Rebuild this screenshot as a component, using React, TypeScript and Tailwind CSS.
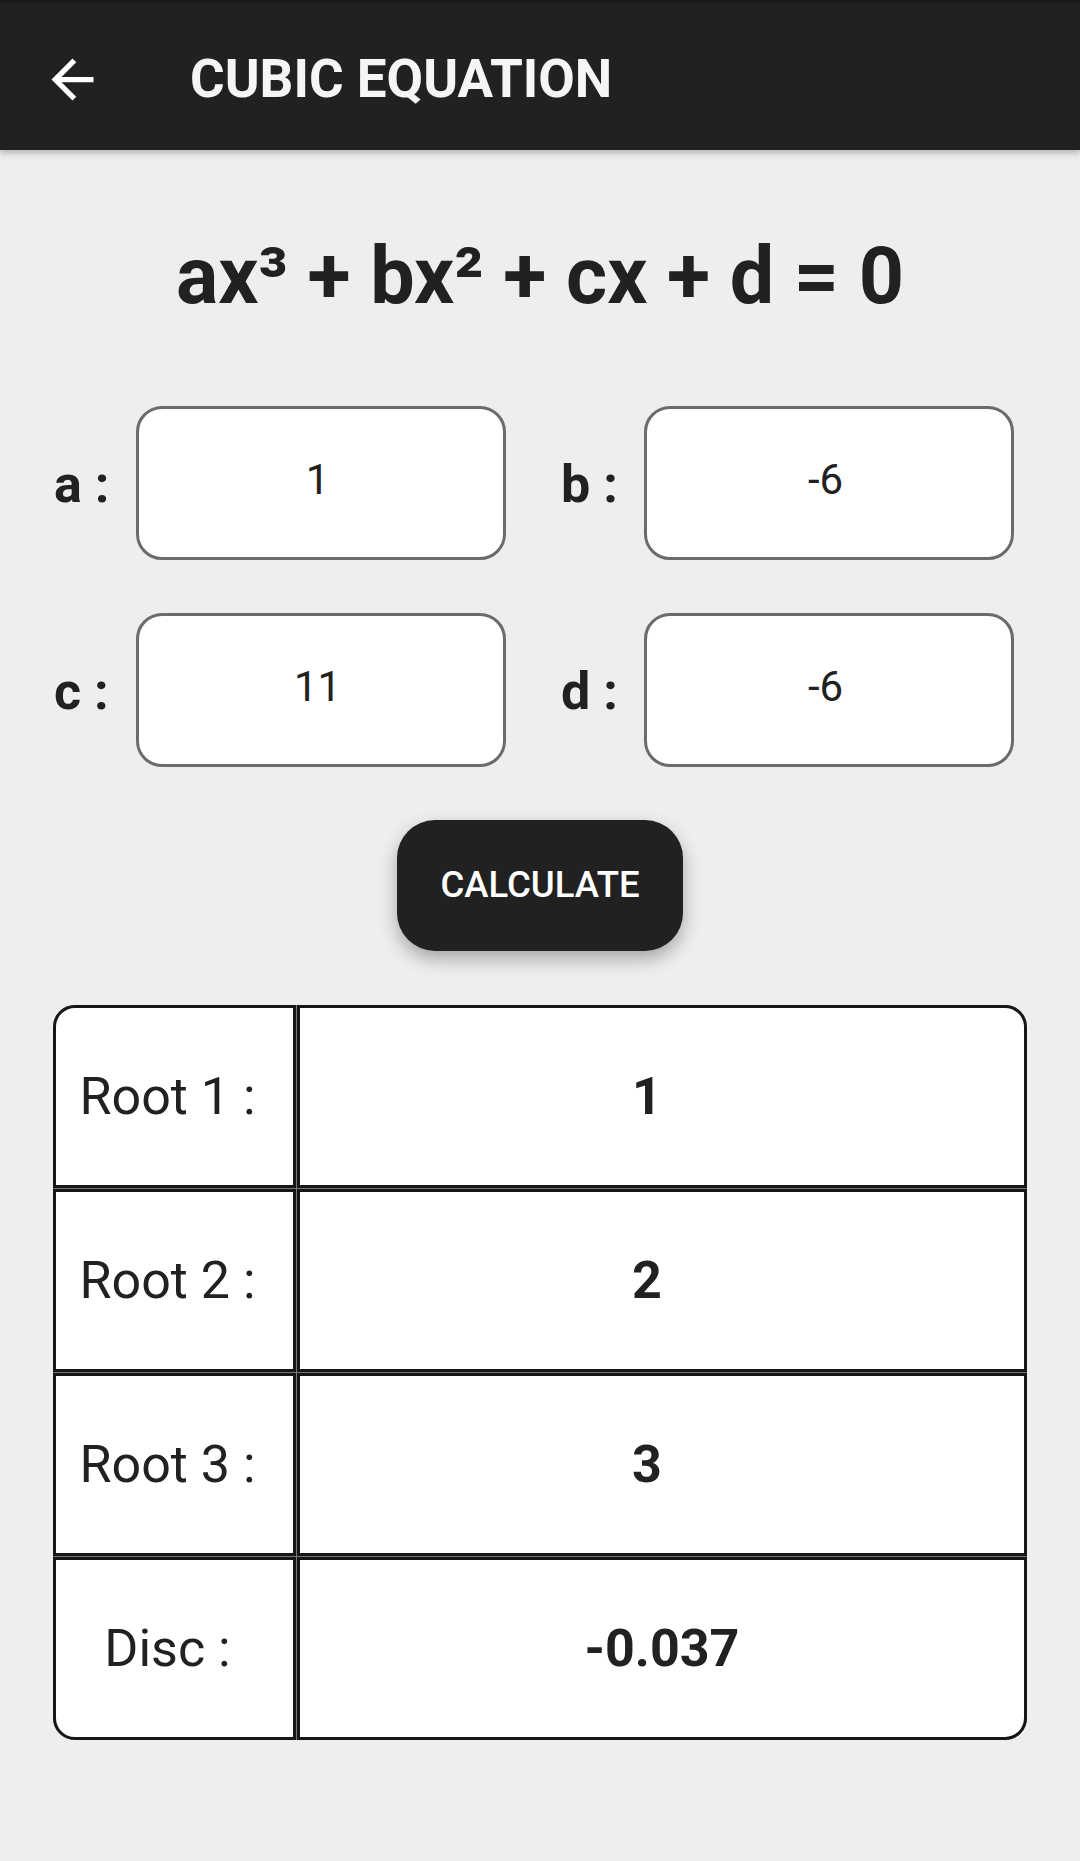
import React from "react"

const inputs = [
    [["a", "1"], ["b", "-6"]],
    [["c", "11"], ["d", "-6"]],
]

const results = [
    { label: "Root 1 :", value: "1", root: true },
    { label: "Root 2 :", value: "2", root: true },
    { label: "Root 3 :", value: "3", root: true },
    { label: "Disc :", value: "-0.037", root: false },
]

const BackArrow = () => (
    <svg width="63" height="63" viewBox="0 0 24 24" fill="#ffffff">
        <path d="M20 11H7.83l5.59-5.59L12 4l-8 8 8 8 1.41-1.41L7.83 13H20v-2z" />
    </svg>
)

const Field = ({ label, value, first }: { label: string; value: string; first: boolean }) => (
    <div className={`flex items-center ${first ? "" : "ml-[55px]"}`}>
        <span className={`${first ? "w-[82px]" : "w-[83px]"} text-[52px] leading-none font-bold text-[#212121] pt-[4px]`}>
            {label} :
        </span>
        <div className="w-[370px] h-[154px] rounded-[26px] border-[3px] border-[#6b6b6b] bg-white flex items-center justify-center pb-[6px] pr-[7px]">
            <span className="text-[42px] leading-none text-[#212121]">{value}</span>
        </div>
    </div>
)

export default function App() {
    return (
        <div className="w-[1080px] min-h-[1861px] bg-[#eeeeee] font-['Roboto',sans-serif]">
            {/* toolbar */}
            <div className="h-[150px] bg-[#212121] border-t-[3px] border-[#191919] pt-[5px] flex items-center shadow-[0_3px_6px_rgba(0,0,0,0.25)] relative">
                <div className="ml-[41px]">
                    <BackArrow />
                </div>
                <span className="ml-[86px] text-[53px] leading-none font-bold text-[#f5f5f5]">CUBIC EQUATION</span>
            </div>

            <div className="mt-[87px] h-[80px] text-center text-[79px] leading-none font-bold text-[#212121]">
                ax³ + bx² + cx + d = 0
            </div>

            <div className="mt-[89px] flex flex-col gap-[53px] pl-[54px]">
                {inputs.map((row, i) => (
                    <div key={i} className="flex">
                        {row.map(([label, value], j) => (
                            <Field key={label} label={label} value={value} first={j === 0} />
                        ))}
                    </div>
                ))}
            </div>

            <div className="mt-[53px] flex justify-center">
                <button className="w-[286px] h-[131px] rounded-[38px] bg-[#212121] text-white text-[36.5px] font-medium leading-none shadow-[0_8px_18px_rgba(0,0,0,0.3)]">
                    CALCULATE
                </button>
            </div>

            <div className="mt-[54px] mx-[53px] grid grid-cols-[243px_1fr] gap-px bg-[#777777] rounded-[22px]">
                {results.map((r, i) => {
                    const first = i === 0
                    const last = i === results.length - 1
                    return (
                        <React.Fragment key={r.label}>
                            <div
                                className={`h-[183px] bg-white border-[3px] border-[#161616] flex items-center justify-center pr-[14px] text-[52px] leading-none text-[#212121] ${first ? "rounded-tl-[22px]" : ""} ${last ? "rounded-bl-[22px]" : ""}`}
                            >
                                {r.label}
                            </div>
                            <div
                                className={`h-[183px] bg-white border-[3px] border-[#161616] flex items-center justify-center text-[52px] leading-none font-bold text-[#212121] ${r.root ? "pr-[30px]" : ""} ${first ? "rounded-tr-[22px]" : ""} ${last ? "rounded-br-[22px]" : ""}`}
                            >
                                {r.value}
                            </div>
                        </React.Fragment>
                    )
                })}
            </div>
        </div>
    )
}
